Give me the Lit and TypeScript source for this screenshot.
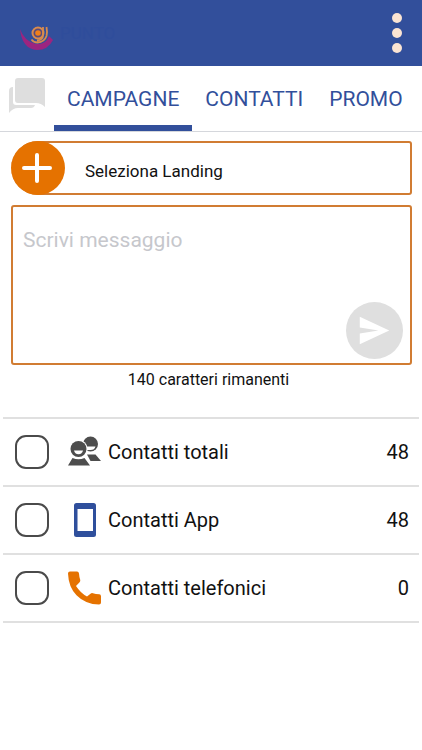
import { LitElement, html, css, svg } from "lit";
import { customElement, property, state } from "lit/decorators.js";

const peopleIcon = svg`
  <path fill="#4d4d4d" d="M19 19.500h8.500l5.500 6.500H22.500z"/>
  <circle cx="22.500" cy="9" r="7.500" fill="#4d4d4d"/>
  <path fill="#fff" d="M17 11.500h10.500q-1 3.500-5 3.500H17z"/>
  <circle cx="10.500" cy="14" r="9.200" fill="#fff"/>
  <circle cx="10.500" cy="14" r="8" fill="#4d4d4d"/>
  <path fill="#fff" d="M6 15.500h9q-.8 3.700-4.500 3.700T6 15.500z"/>
  <path fill="#4d4d4d" d="M4.500 23Q10.500 25.500 16.500 23L22 30.500H0z"/>`;

const deviceIcon = svg`
  <path fill="#2f4f9c" fill-rule="evenodd" d="M8.500 0h17Q28 0 28 2.500v29q0 2.500-2.500 2.500h-17Q6 34 6 31.500v-29Q6 0 8.500 0zM9.500 6v22h15.500V6z"/>`;

const phoneIcon = svg`
  <path fill="#e57200" d="M2 .5h7Q10.700.500 11 2.500q.2 3.300 1.200 6.300.4 1.400-.6 2.400L8 15q4.500 7 11 10.500l3.500-2.800q1-.9 2.400-.5 3 .9 6.300 1.100 1.800.2 1.800 2v6.200q0 2-2 2Q17.500 33.500 8.500 24.300.5 16 0 2.500 0 .5 2 .5z"/>`;

@customElement("contact-row")
export class ContactRow extends LitElement {
  @property() label = "";
  @property() icon = "";
  @property({ type: Number }) count = 0;

  static styles = css`
    :host { display: block; border-bottom: 2px solid #e0e0e0; }
    .row { display: flex; align-items: center; height: 66px; padding: 0 10px 0 12px; font-size: 20px; line-height: 24px; color: #111; }
    .check { appearance: none; flex: none; box-sizing: border-box; width: 34px; height: 34px; margin: 0; border: 2px solid #4a4a4a; border-radius: 11px; background: #fff; }
    .check:checked { background: #324f9b; box-shadow: inset 0 0 0 5px #fff; }
    .icon { flex: none; width: 34px; height: 34px; margin: 0 6px 0 19px; }
    .label { flex: 1; }
  `;

  render() {
    const glyph = this.icon === "people" ? peopleIcon : this.icon === "device" ? deviceIcon : phoneIcon;
    return html`<label class="row">
      <input class="check" type="checkbox" />
      <svg class="icon" viewBox="0 0 34 34" aria-hidden="true">${glyph}</svg>
      <span class="label">${this.label}</span>
      <span>${this.count}</span>
    </label>`;
  }
}

@customElement("app-root")
export class AppRoot extends LitElement {
  @state() private message = "";

  private contacts = [
    { label: "Contatti totali", icon: "people", count: 48 },
    { label: "Contatti App", icon: "device", count: 48 },
    { label: "Contatti telefonici", icon: "phone", count: 0 },
  ];

  static styles = css`
    :host { display: block; min-height: 100vh; background: #fff; font-family: Roboto, "Liberation Sans", sans-serif; color: #111; }
    button { border: 0; padding: 0; background: none; font: inherit; color: inherit; cursor: pointer; }
    .bar { display: flex; align-items: center; justify-content: space-between; height: 66px; padding: 0 16px 0 19px; background: #324f9b; }
    .brand { display: flex; align-items: center; gap: 7px; font-size: 17px; line-height: 20px; color: #2f4d9b; }
    .logo { width: 34px; height: 34px; }
    .more { display: flex; width: 18px; height: 44px; }
    .tabs { display: flex; align-items: stretch; height: 65px; overflow: hidden; border-bottom: 1px solid #d5d7dc; }
    .tab { flex: none; box-sizing: border-box; padding: 6px 13px 0; border-bottom: 6px solid transparent; font-size: 21px; line-height: 26px; color: #324f9b; white-space: nowrap; }
    .tab.active { border-color: #324f9b; }
    .chat { flex: none; width: 54px; display: flex; padding: 12px 0 0 9px; box-sizing: border-box; }
    .chat svg { width: 36px; height: 36px; }
    .compose { padding: 9px 10px 0 11px; }
    .landing { display: flex; align-items: center; width: 100%; height: 54px; box-sizing: border-box; border: 2px solid #d17c32; border-left: 0; border-radius: 27px 3px 3px 27px; font-size: 17px; line-height: 20px; text-align: left; }
    .plus { flex: none; width: 54px; height: 54px; margin-right: 20px; }
    .landing-text { padding-top: 6px; }
    .box { position: relative; margin-top: 10px; }
    .message { display: block; box-sizing: border-box; width: 100%; height: 160px; padding: 20px 10px; border: 2px solid #d17c32; border-radius: 3px; outline: 0; resize: none; background: #fff; font: 21px/26px Roboto, sans-serif; color: #111; }
    .message::placeholder { color: #c6c7cc; opacity: 1; }
    .send { position: absolute; right: 9px; bottom: 6px; width: 57px; height: 57px; }
    .send svg { display: block; width: 57px; height: 57px; }
    .left { margin: 5px 0 0; padding-right: 6px; text-align: center; font-size: 16px; line-height: 20px; }
    .list { margin: 27px 3px 0; border-top: 2px solid #e0e0e0; }
  `;

  private onInput(e: Event) {
    this.message = (e.target as HTMLTextAreaElement).value;
  }

  render() {
    return html`
      <header class="bar">
        <div class="brand">
          <svg class="logo" viewBox="0 0 34 34" fill="none" aria-hidden="true">
            <path fill="#9c2580" d="M1 13Q5 25 17 28 27 29 30 20L34 24Q29 34 18 34 3 33 1 13z"/>
            <circle cx="19" cy="17" r="5.500" fill="#5b4a78" stroke="#d98b4e" stroke-width="2"/>
            <circle cx="19" cy="17" r="2.800" fill="#f07f1a"/>
            <path d="M24 11v8q0 5-6 5.500M27.500 11q1 5 0 9-2 6-9 6.500-4 0-6-3" stroke="#d98b4e" stroke-width="1.800"/>
          </svg>
          <span>PUNTO</span>
        </div>
        <button class="more" aria-label="Menu">
          <svg width="18" height="44" viewBox="0 0 18 44" fill="#fbe4d3"><circle cx="9" cy="7" r="5"/><circle cx="9" cy="22" r="5"/><circle cx="9" cy="37" r="5"/></svg>
        </button>
      </header>
      <nav class="tabs">
        <button class="chat" aria-label="Chat">
          <svg viewBox="0 0 36 36" fill="#dedede"><path d="M9 0h24q3 0 3 3v26q-4-4-9-4H9q-3 0-3-3V3q0-3 3-3z"/><path d="M0 13q0-4 4-4v15q0 3 3 3h19q-1 3-4 3H9q-5 0-9 5z"/></svg>
        </button>
        <button class="tab active">CAMPAGNE</button>
        <button class="tab">CONTATTI</button>
        <button class="tab">PROMO</button>
      </nav>
      <main>
        <section class="compose">
          <button class="landing">
            <svg class="plus" viewBox="0 0 54 54" aria-hidden="true"><circle cx="27" cy="27" r="27" fill="#e57200"/><path d="M26 14v26M13 27h26" stroke="#fff" stroke-width="4" stroke-linecap="round"/></svg>
            <span class="landing-text">Seleziona Landing</span>
          </button>
          <div class="box">
            <textarea class="message" aria-label="Messaggio" maxlength="140" placeholder="Scrivi messaggio" @input=${this.onInput}></textarea>
            <button class="send" aria-label="Invia"><svg viewBox="0 0 58 58"><circle cx="29" cy="29" r="29" fill="#dfdfdf"/><path fill="#fff" d="M14 15l30 14-30 14V32l19-3-19-3z"/></svg></button>
          </div>
          <p class="left">${140 - this.message.length} caratteri rimanenti</p>
        </section>
        <section class="list">
          ${this.contacts.map((c) => html`<contact-row .label=${c.label} .icon=${c.icon} .count=${c.count}></contact-row>`)}
        </section>
      </main>`;
  }
}
